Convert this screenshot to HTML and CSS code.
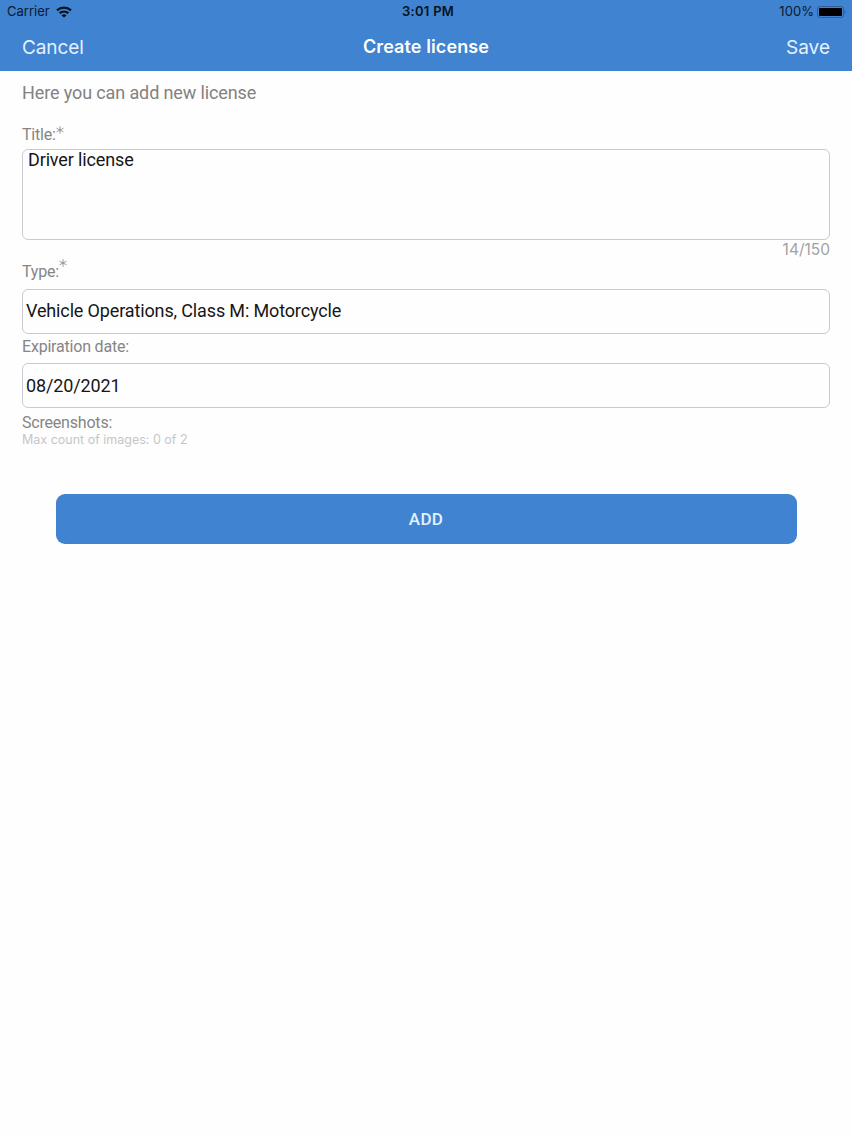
FILE: index.html
```html
<!DOCTYPE html>
<html lang="en">
<head>
<meta charset="utf-8">
<title>Create license</title>
<link rel="stylesheet" href="styles.css">
</head>
<body>
<header class="top">
  <div class="status">
    <div class="carrier"><span class="carrier-name">Carrier</span>
      <svg class="wifi" width="16" height="12" viewBox="0 0 16 12" fill="none" stroke="#081321" stroke-width="2.3">
        <path d="M1 4.300C5 .6 11 .6 15 4.300"/><path d="M3.600 7.200c2.500-2.200 6.300-2.200 8.800 0"/><path d="M5.500 9.200c1.500-1.300 3.500-1.300 5 0L8 11.700Z" fill="#081321" stroke="none"/>
      </svg>
    </div>
    <div class="time">3:01 PM</div>
    <div class="power"><span class="percent">100%</span>
      <svg width="29" height="12" viewBox="0 0 29 12"><rect x=".5" y=".5" width="26" height="11" rx="2.500" fill="none" stroke="#2d5f98"/><rect x="2" y="2" width="23" height="8" rx="1" fill="#000"/><path d="M27.600 4.200c1.500.6 1.500 3 0 3.600Z" fill="#2d5f98"/></svg>
    </div>
  </div>
  <nav class="nav">
    <div class="action"><span class="cancel">Cancel</span></div>
    <div class="nav-title"><span class="heading">Create license</span></div>
    <div class="action right"><span class="save">Save</span></div>
  </nav>
</header>
<main class="form">
  <p class="intro">Here you can add new license</p>
  <div class="label title-label">Title:<svg class="star" width="8" height="8" viewBox="0 0 8 8"><path d="M4 .2v7.600M.5 2.200l7 3.600M7.500 2.200l-7 3.600"/></svg></div>
  <div class="field area">Driver license</div>
  <div class="counter">14/150</div>
  <div class="label type-label">Type:<svg class="star raised" width="8" height="8" viewBox="0 0 8 8"><path d="M4 .2v7.600M.5 2.200l7 3.600M7.500 2.200l-7 3.600"/></svg></div>
  <div class="field type"><span class="type-value">Vehicle Operations, Class M: Motorcycle</span></div>
  <div class="label date-label"><span class="date-text">Expiration date:</span></div>
  <div class="field date"><span class="date-value">08/20/2021</span></div>
  <div class="label shots-label"><span class="shots-text">Screenshots:</span></div>
  <div class="hint">Max count of images: 0 of 2</div>
  <div class="add">ADD</div>
</main>
</body>
</html>
```
FILE: styles.css
```css
* { box-sizing: border-box; }
body { margin: 0; height: 1136px; background: #fefefe; font-family: Roboto, sans-serif; }
.top { height: 71px; background: #4083d1; font-family: Inter, sans-serif; }
.status { display: grid; grid-template-columns: 1fr auto 1fr; height: 23px; padding: 0 6px 0 7px; color: #0a1a2e; font-size: 13px; line-height: 23px; }
.carrier, .power { display: flex; align-items: center; }
.carrier { gap: 6px; }
.time { color: #06121f; font-weight: 600; letter-spacing: .3px; padding-left: 3px; }
.power { justify-content: flex-end; gap: 3px; }
.percent { letter-spacing: .05px; }
.nav { display: grid; grid-template-columns: 1fr auto 1fr; height: 48px; padding: 1px 22px 0; align-items: center; color: #e4f1ff; font-size: 19px; line-height: 47px; }
.cancel { letter-spacing: -.1px; }
.right { text-align: right; }
.nav-title { color: #fff; font-weight: 600; font-size: 18px; line-height: 45px; letter-spacing: .1px; padding-bottom: 2px; }
.form { padding: 0 22px; }
.intro { margin: 0; padding-top: 10px; height: 53px; color: #828282; font-size: 18px; line-height: 24px; letter-spacing: -.12px; }
.label { display: flex; align-items: flex-start; color: #858585; font-size: 16px; line-height: 20px; letter-spacing: -.2px; }
.title-label { height: 25px; padding-top: 1px; }
.star { margin: 1px 0 0; fill: none; stroke: #858585; stroke-width: .8; }
.raised { margin-top: -3px; }
.field { border: 1px solid #cbcad0; border-radius: 6px; color: #161616; font-size: 18px; letter-spacing: -.14px; }
.area { height: 91px; padding-left: 5px; line-height: 19px; }
.counter { height: 22px; color: #a2a2a2; font-family: Inter, sans-serif; font-size: 15.5px; line-height: 20px; text-align: right; }
.type-label { height: 27px; }
.type, .date { height: 45px; padding-left: 3px; line-height: 43px; }
.type { line-height: 41px; }
.date-label { height: 29px; padding-top: 3px; }
.shots-label { height: 24px; padding-top: 5px; }
.hint { height: 16px; color: #c6c6c8; font-family: Inter, sans-serif; font-size: 12.5px; line-height: 16px; }
.add { height: 50px; margin: 46px 33.500px 0; border-radius: 9px; background: #4083d1; color: #e4f1ff; font-size: 17px; font-weight: 500; line-height: 50px; letter-spacing: .3px; text-align: center; }
```
